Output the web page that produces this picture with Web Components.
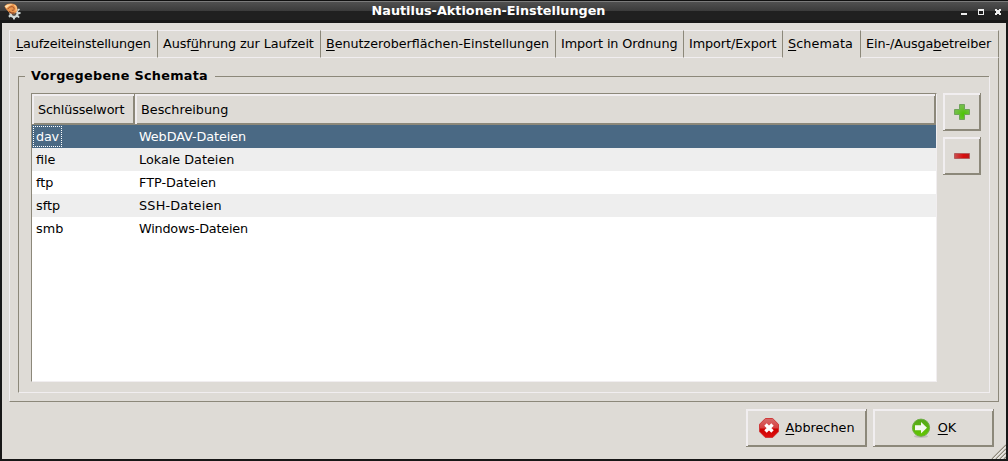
<!DOCTYPE html>
<html lang="de"><head><meta charset="utf-8"><title>Nautilus-Aktionen-Einstellungen</title>
<style>
html,body{margin:0;height:100%;overflow:hidden}
body{font:12.8px/16px "DejaVu Sans",sans-serif;color:#000;--bg:#dedbd6;--hi:#f1eef0;--lo:#8c887a;--sel:#4a6984}
</style></head><body>
<prefs-window></prefs-window>
<script>
function define(name, html){
  const t=document.createElement('template');t.innerHTML=html;
  customElements.define(name,class extends HTMLElement{
    constructor(){super();this.attachShadow({mode:'open'}).append(t.content.cloneNode(true));}
  });
}
define('title-bar',`<style>
:host{display:flex;height:23px;box-sizing:border-box;align-items:center;color:#fff;font-weight:bold;
background:linear-gradient(#101010 0 1px,#7b7b7b 1px 2px,#505050 2px,#3b3b3b 11px,#202020 11px 20px,#161616 20px);padding:0 4px}
.logo{width:17px;height:17px;flex:none}
h1{flex:1;margin:0 -12px 0 -15px;font:inherit;text-align:center;padding-bottom:2px}
.c{width:46px;height:16px;flex:none;margin-right:-1px}
</style>
<svg class="logo" viewBox="0 0 17 17"><g fill="#d3dcd9"><circle cx="10" cy="10.5" r="4.6"/><path d="M8.8 14h2.4l-.4 2.6H9.2zM12.4 13.4l1.6-1.3 1.7 2-1.2 1zM14 9.2l2.5-.2v2l-2.5.2zM4.2 13l1.6-1.4 1.4 1.6-1.5 1.6zM13 6.6l2-1.2 1 1.2-2 1.6z"/></g><circle cx="10" cy="10.6" r="2.4" fill="#5c5148"/>
<path d="M.5 3.2C3 .2 8 0 11 1.6 14 3.6 14.2 7.6 12 9.6 10 11.4 6.4 11.2 4.6 9 3.5 7.4 1.2 6 .5 3.2z" fill="#e9944c"/><path d="M.7 3.2Q3.5.4 8.8 1.5 5 2.3 2.6 5.3z" fill="#ffdca8"/><path d="M3.6 6.2Q5.4 3.4 8 3.6 10.7 4 10.2 6.4 9.3 8 7.8 7.1" fill="none" stroke="#a5552a" stroke-width="1"/><path d="M10.2 2.3Q13.2 4 12 8" fill="none" stroke="#ffc685" stroke-width="1.2"/><path d="M5.2 8.3Q7.4 11 10.4 9.7" fill="none" stroke="#8a4320" stroke-width="1.2"/></svg>
<h1>Nautilus-Aktionen-Einstellungen</h1>
<svg class="c" viewBox="0 0 46 16" shape-rendering="crispEdges"><path d="M2 9h6v2H2z" fill="#ededed"/><path d="M19 5h6v6h-6zM20 7v3h4V7z" fill-rule="evenodd" fill="#ededed"/><path d="M36 5h2v1h2V5h2v2h-1v2h1v2h-2v-1h-2v1h-2V9h1V7h-1z" fill="#ededed"/></svg>`);
define('tab-item',`<style>
:host{display:block;box-sizing:border-box;height:28px;padding:5px 0 0 5px;letter-spacing:-.09px;white-space:nowrap;border-top:1px solid var(--hi);border-bottom:1px solid var(--hi);border-right:1px solid var(--lo)}
:host([selected]){border-bottom-color:transparent;letter-spacing:.08px}
:host([first]){padding-left:6px;letter-spacing:-.12px}
:host([long]){font-size:12.7px;letter-spacing:0}
</style><slot></slot>`);
define('tab-panel',`<style>
:host{display:flex;flex-direction:column;box-sizing:border-box;height:372px;border-left:1px solid var(--hi);border-bottom:1px solid var(--lo)}
nav{display:grid;grid-template-columns:148px 163px 235px 128px 99px 78px 138px}
.p{flex:1;border-right:1px solid var(--lo);padding:18px 8px 8px 8px}
</style><nav><slot name="tab"></slot></nav><div class="p"><slot></slot></div>`);
define('group-box',`<style>
:host{display:block;box-sizing:border-box;width:972px;height:317px;border:1px solid;border-color:transparent var(--hi) var(--hi) var(--lo)}
.cap{display:grid;grid-template-columns:6px auto 1fr;height:17px;margin-top:-1px;column-gap:6px}
.cap i{border-top:1px solid var(--lo);margin-left:-1px}
.cap i:last-child{margin-left:1px}
b{margin-top:-8px;white-space:nowrap;line-height:16px;height:16px;letter-spacing:.28px}
.body{display:flex;gap:6px;padding-left:12px;align-items:flex-start}
</style><div class="cap"><i></i><b><slot name="caption"></slot></b><i></i></div><div class="body"><slot></slot></div>`);
define('push-button',`<style>
:host{display:flex;align-items:center;justify-content:center;box-sizing:border-box;height:38px;background:var(--bg);box-shadow:inset -1px -1px var(--lo),inset 2px 2px var(--hi),inset -2px -2px var(--lo)}
</style><slot></slot>`);
define('table-row',`<style>
:host{display:grid;grid-template-columns:103px 1fr;height:23px;align-items:center;background:#fff}
:host(:nth-of-type(even)){background:#eee}
:host([selected]){background:var(--sel);color:#fff}
.k{justify-self:start;margin-left:1px;padding:2px 3px;line-height:17px;height:17px}
:host([selected]) .k{padding:1px 2px;border:1px dotted #fff;letter-spacing:-.2px}
.v{padding-left:4px;letter-spacing:var(--track,0)}
</style><span class="k"><slot name="key"></slot></span><span class="v"><slot></slot></span>`);
define('scheme-table',`<style>
:host{display:block;box-sizing:border-box;width:906px;height:289px;background:#fff;border:1px solid;border-color:var(--lo) var(--hi) var(--hi) var(--lo)}
header{display:grid;grid-template-columns:103px 801px;height:31px}
header div{background:var(--bg);box-shadow:inset -1px -1px var(--lo),inset 2px 2px var(--hi),inset -2px -2px var(--lo);padding:8px 6px 0}
header div:first-child{letter-spacing:-.15px}
</style><header><div>Schlüsselwort</div><div>Beschreibung</div></header><slot></slot>`);
define('prefs-window',`<style>
:host{display:flex;flex-direction:column;height:461px;width:1008px;background:#171717}
main{box-sizing:border-box;margin:0 2px 2px;height:436px;width:1004px;background:var(--bg);padding:7px 7px 0}
.side{display:flex;flex-direction:column;gap:6px}
.side push-button{width:38px}
footer{display:flex;justify-content:flex-end;gap:6px;padding:7px 5px 0 0}
footer push-button{width:121px;gap:7px}
.grip{position:absolute;left:991px;top:444px}
tab-panel{width:990px}
u{text-underline-offset:2px;text-decoration-thickness:1px;text-decoration-skip-ink:none}
</style>
<title-bar></title-bar>
<main><tab-panel>
<tab-item slot="tab" first><u>L</u>aufzeiteinstellungen</tab-item><tab-item slot="tab">Ausf<u>ü</u>hrung zur Laufzeit</tab-item><tab-item slot="tab" long><u>B</u>enutzeroberflächen-Einstellungen</tab-item><tab-item slot="tab">Import in Ordnung</tab-item><tab-item slot="tab">Import/Export</tab-item><tab-item slot="tab" selected><u>S</u>chemata</tab-item><tab-item slot="tab">Ein-/Ausga<u>b</u>etreiber</tab-item>
<group-box><span slot="caption">Vorgegebene Schemata</span>
<scheme-table>
<table-row selected style="--track:-.08px"><span slot="key">dav</span>WebDAV-Dateien</table-row>
<table-row><span slot="key">file</span>Lokale Dateien</table-row>
<table-row><span slot="key">ftp</span>FTP-Dateien</table-row>
<table-row style="--track:.2px"><span slot="key">sftp</span>SSH-Dateien</table-row>
<table-row style="--track:-.2px"><span slot="key">smb</span>Windows-Dateien</table-row>
</scheme-table>
<div class="side">
<push-button><svg width="16" height="16"><defs><radialGradient id="a" cx=".6" cy=".65"><stop stop-color="#4bc500"/><stop offset="1" stop-color="#72bf45"/></radialGradient></defs><path d="M5.5 .5h5v5h5v5h-5v5h-5v-5h-5v-5h5z" fill="url(#a)" stroke="#6fa45a"/></svg></push-button>
<push-button><svg width="16" height="16"><defs><linearGradient id="b"><stop stop-color="#c85050"/><stop offset=".6" stop-color="#d90c0c"/><stop offset="1" stop-color="#b81818"/></linearGradient></defs><path d="M.5 5.5h15v5H.5z" fill="url(#b)" stroke="#b55c5c"/></svg></push-button>
</div></group-box></tab-panel>
<footer>
<push-button><svg width="20" height="20"><defs><linearGradient id="r" x2="0" y2="1"><stop stop-color="#d76a6a"/><stop offset=".5" stop-color="#d64040"/><stop offset=".55" stop-color="#cc0000"/><stop offset="1" stop-color="#e01010"/></linearGradient></defs><path d="M6.3.5h7.4l5.8 5.8v7.4l-5.8 5.8H6.3L.5 13.7V6.3z" fill="url(#r)" stroke="#cf3a3a"/><path d="M6.5 6.5l7 7M13.5 6.5l-7 7" stroke="#fff" stroke-width="3.4"/></svg><span><u>A</u>bbrechen</span></push-button>
<push-button><svg width="20" height="20"><defs><linearGradient id="g" x2="0" y2="1"><stop stop-color="#55a51c"/><stop offset="1" stop-color="#62c800"/></linearGradient></defs><ellipse cx="10" cy="18.4" rx="7" ry="1.6" fill="#0002"/><circle cx="10" cy="9.7" r="8.6" fill="url(#g)" stroke="#6fae45"/><path d="M4 7.3h6V4l6 5.7-6 5.8v-3.3H4z" fill="#f4f8f0"/></svg><span><u>O</u>K</span></push-button>
</footer>
<svg class="grip" width="15" height="15"><g stroke="#8c887a" stroke-width="1.3"><path d="M1 15L15 1M5 15L15 5M9 15L15 9M13 15l2-2"/></g><path d="M2.3 15L15 2.3M6.3 15L15 6.3M10.3 15L15 10.3" stroke="#f7f5f2"/></svg>
</main>`);
</script></body></html>
